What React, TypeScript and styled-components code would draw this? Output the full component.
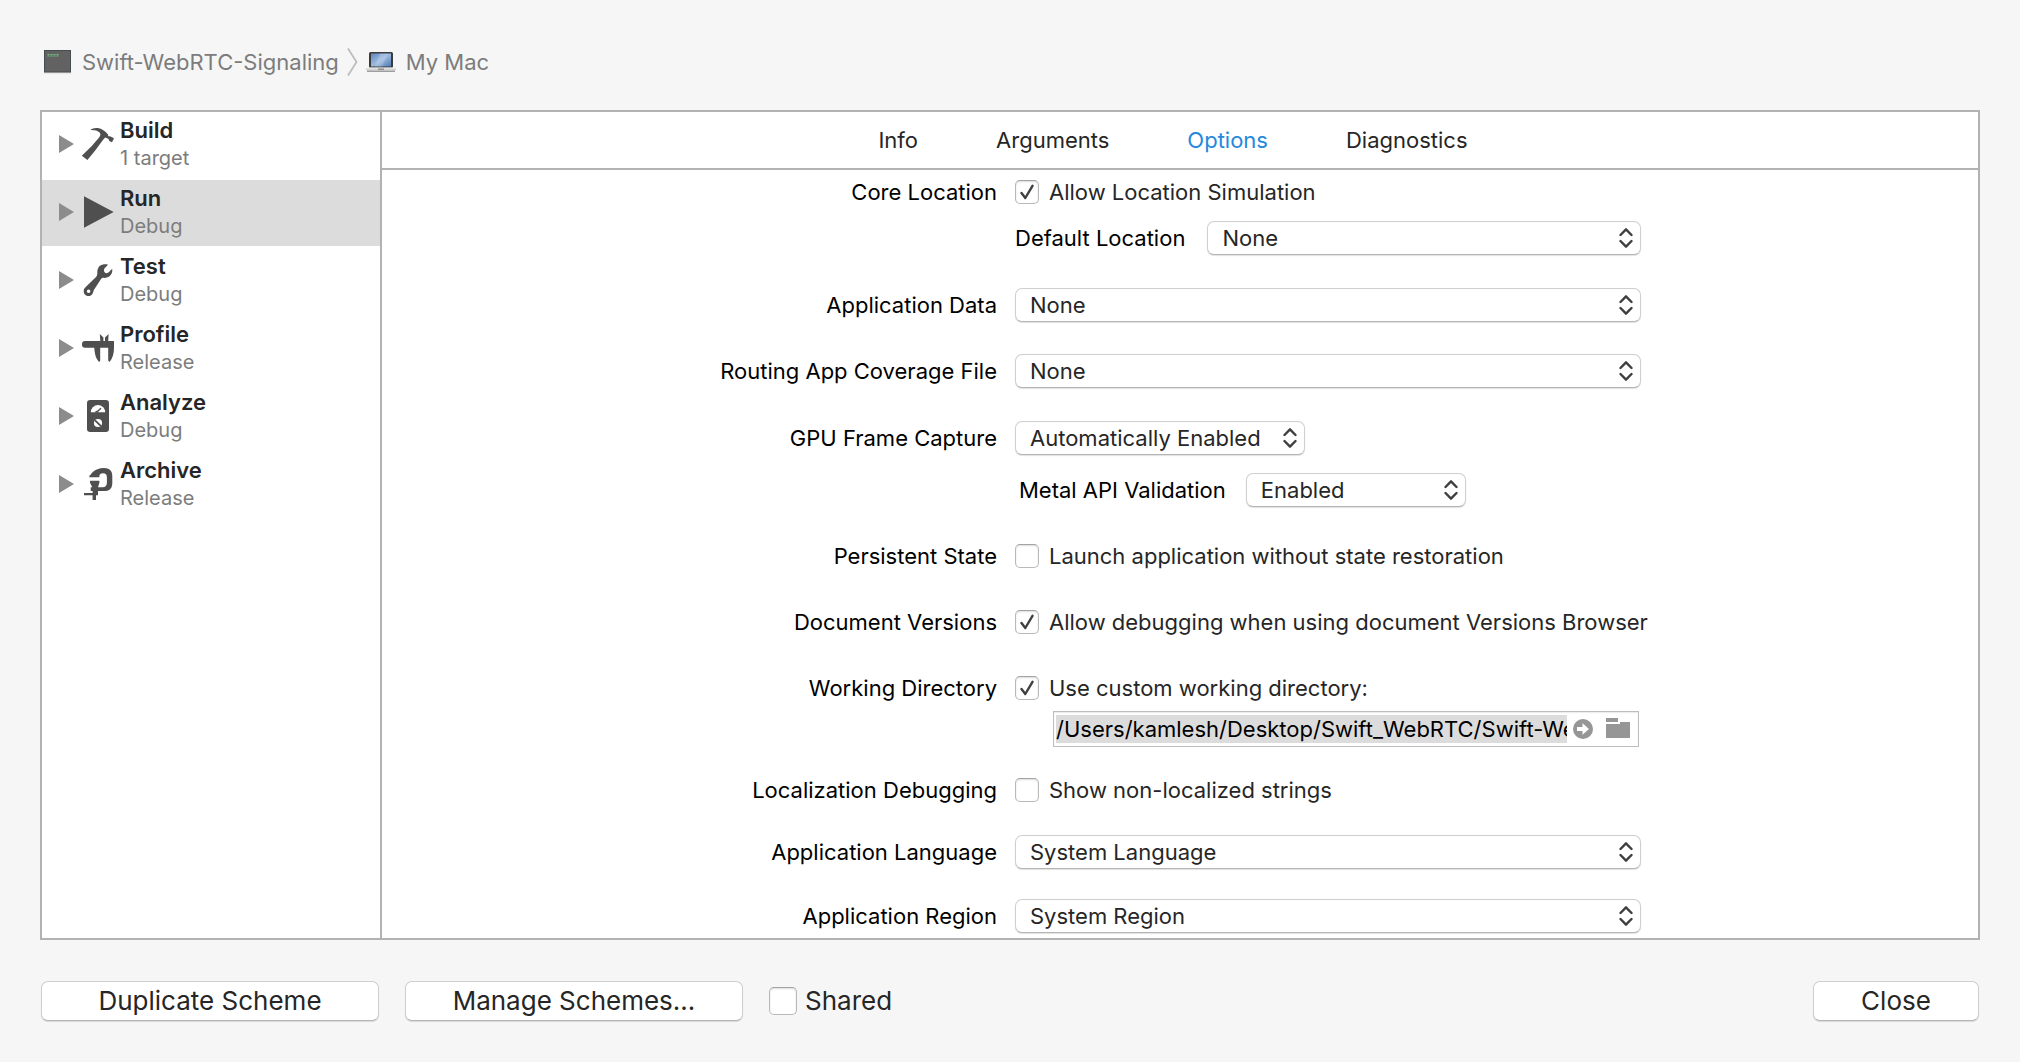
import React, { useState } from 'react';
import type { ReactNode } from 'react';
import styled, { createGlobalStyle, css } from 'styled-components';

const color = {
  window: '#f6f6f6',
  pane: '#ffffff',
  line: '#b2b2b2',
  selected: '#dcdcdc',
  text: '#262626',
  label: '#000000',
  muted: '#7c7c7c',
  glyph: '#4f4f4f',
  accent: '#2489dc',
};

const GlobalStyle = createGlobalStyle`
  *, *::before, *::after { box-sizing: border-box; }
  body { margin: 0; background: ${color.window}; }
  button, input, select { font: inherit; color: inherit; margin: 0; }
  button { border: 0; padding: 0; background: none; }
`;

const Window = styled.main`
  min-height: 100vh;
  padding: 44px 40px 40px;
  background: ${color.window};
  color: ${color.text};
  font-family: Inter, 'Liberation Sans', sans-serif;
  font-size: 22px;
  line-height: 28px;
`;

const Breadcrumb = styled.nav`
  display: flex;
  align-items: center;
  gap: 8px;
  height: 36px;
  margin-bottom: 30px;
  padding-left: 3px;
  color: ${color.muted};
`;

const Crumb = styled.button`
  display: flex;
  align-items: center;
  gap: 10px;
`;

const Panel = styled.section`
  display: grid;
  grid-template-columns: 338px minmax(0, 1fr);
  border: 2px solid ${color.line};
  background: ${color.pane};
`;

const ActionList = styled.ul`
  display: flex;
  flex-direction: column;
  gap: 2px;
  margin: 0;
  padding: 0;
  list-style: none;
`;

const ActionItem = styled.li<{ $selected: boolean }>`
  display: flex;
  align-items: center;
  gap: 8px;
  height: 66px;
  padding: 0 0 2px 17px;
  background: ${(p) => (p.$selected ? color.selected : 'transparent')};
`;

const Disclosure = styled.button`
  display: flex;
  width: 15px;
`;

const ActionButton = styled.button`
  display: flex;
  flex: 1;
  align-items: center;
  gap: 6px;
  text-align: left;
`;

const ActionText = styled.span`
  display: flex;
  flex-direction: column;
`;

const ActionName = styled.strong`
  font-weight: 600;
`;

const ActionDetail = styled.span`
  font-size: 20px;
  color: ${color.muted};
`;

const Content = styled.div`
  border-left: 2px solid ${color.line};
`;

const TabBar = styled.div`
  display: flex;
  justify-content: center;
  gap: 78px;
  height: 58px;
  padding-right: 14px;
  border-bottom: 2px solid ${color.line};
`;

const Tab = styled.button<{ $active: boolean }>`
  color: ${(p) => (p.$active ? color.accent : color.text)};
`;

const Form = styled.form`
  padding: 5px 0;
`;

const Row = styled.div<{ $space?: number }>`
  display: grid;
  grid-template-columns: minmax(0, 615fr) minmax(0, 626fr) minmax(0, 319fr);
  column-gap: 18px;
  margin-top: ${(p) => p.$space ?? 0}px;
`;

const rowLabel = css`
  line-height: 34px;
  color: ${color.label};
  white-space: nowrap;
`;

const RowLabel = styled.label`
  ${rowLabel}
  text-align: right;
`;

const RowTitle = styled.span`
  ${rowLabel}
  text-align: right;
`;

const Controls = styled.div<{ $gap?: number }>`
  display: flex;
  flex-direction: column;
  align-items: flex-start;
  gap: ${(p) => p.$gap ?? 0}px;
  min-width: 0;
`;

const SubRow = styled.div<{ $fill?: boolean; $gap: number }>`
  display: flex;
  gap: ${(p) => p.$gap}px;
  width: ${(p) => (p.$fill ? '100%' : 'auto')};
  padding-left: ${(p) => (p.$fill ? 0 : 4)}px;
`;

const SubLabel = styled.label`
  ${rowLabel}
`;

const raised = css`
  border: 1px solid #cfcfcf;
  border-bottom-color: #b4b4b4;
  border-radius: 7px;
  background: #ffffff;
  box-shadow: 0 1px 1px rgba(0, 0, 0, 0.12);
`;

const PopupFrame = styled.div<{ $width?: number }>`
  display: grid;
  align-items: center;
  ${(p) => (p.$width ? `width: ${p.$width}px;` : 'flex: 1;')}
`;

const PopupSelect = styled.select`
  ${raised}
  grid-area: 1 / 1;
  width: 100%;
  height: 34px;
  padding: 0 30px 0 14px;
  appearance: none;
`;

const PopupArrows = styled.svg`
  grid-area: 1 / 1;
  justify-self: end;
  margin-right: 8px;
  pointer-events: none;
`;

const CheckLabel = styled.label<{ $large?: boolean }>`
  display: flex;
  align-items: center;
  gap: ${(p) => (p.$large ? 8 : 10)}px;
  height: ${(p) => (p.$large ? 40 : 34)}px;
  white-space: nowrap;
`;

const CheckFrame = styled.span`
  display: grid;
  place-items: center;
`;

const CheckInput = styled.input<{ $size: number }>`
  grid-area: 1 / 1;
  width: ${(p) => p.$size}px;
  height: ${(p) => p.$size}px;
  border: 1px solid #b9b9b9;
  border-top-color: #a3a3a3;
  border-radius: 5px;
  background: #ffffff;
  box-shadow: inset 0 1px 2px rgba(0, 0, 0, 0.14);
  appearance: none;
`;

const CheckMark = styled.svg`
  grid-area: 1 / 1;
  pointer-events: none;
`;

const PathField = styled.div`
  display: flex;
  align-items: center;
  align-self: stretch;
  height: 36px;
  margin: 0 2px 0 38px;
  padding: 0 8px 0 2px;
  border: 1px solid #bdbdbd;
  box-shadow: inset 0 1px 1px rgba(0, 0, 0, 0.08);
`;

const PathInput = styled.input`
  flex: 1;
  min-width: 0;
  height: 28px;
  margin-right: 6px;
  padding: 0;
  border: 0;
  outline: 0;
  background: ${color.selected};
  color: ${color.label};
`;

const IconButton = styled.button`
  display: flex;

  & + & {
    margin-left: 13px;
  }
`;

const Footer = styled.footer`
  display: flex;
  align-items: center;
  gap: 26px;
  margin-top: 41px;
  padding: 0 1px;
  font-size: 26px;
`;

const PushButton = styled.button<{ $width: number }>`
  ${raised}
  width: ${(p) => p.$width}px;
  height: 40px;
`;

const FooterEnd = styled.div`
  margin-left: auto;
`;

const HammerIcon = () => (
  <svg width="32" height="32" viewBox="0 0 32 32" fill={color.glyph} overflow="visible">
    <path d="M9 1.2C12 .1 14.500-.2 16.800.2C19.500.7 21.800 2.200 23.400 3.800L25.900 6.200L26.300 8.200L28 8.300L32 10.200L30 14.200L27.300 13L26.300 10.800L23.200 9.400L21.300 11.600L13 22.700L5.400 32L-.2 27.700L9.800 18L17.300 9.200C18.600 7.400 18.800 6.200 17.600 4.600C15.800 2.500 12.500 1.800 9 1.900Z" />
  </svg>
);

const PlayIcon = () => (
  <svg width="32" height="32" viewBox="0 0 32 32" fill={color.glyph}>
    <path d="M2 .3L31.700 16L2 31.700Z" />
  </svg>
);

const WrenchIcon = () => (
  <svg width="32" height="32" viewBox="0 0 32 32" fill={color.glyph}>
    <path
      fillRule="evenodd"
      d="M25.700.4C25.800 1.200 25.200 1.800 24.400 2.500C22.800 3.900 21.800 5 22 6.800C22.200 8.300 23.300 9.300 24.800 9.200C26.500 9.100 27.500 7.500 28.600 6.300C29.200 5.600 29.700 5.200 30.300 5.300C30.600 8 29.600 11 27.200 12.600C25.300 13.900 23 14 20.800 13.800C19.900 13.900 19.200 14.700 18.400 15.900L11.700 26.200C11.300 28.900 9.800 32 6.700 32C3.800 32 1.700 29.900 1.700 27.200C1.700 25.500 2.400 24.300 3.700 23.100L13.800 13.200C15.200 11.600 15.200 10.600 15.300 8.900C15.200 6.300 15.800 3.800 17.600 2C19.700.2 23 0 25.700.4ZM6.600 25.500A1.800 1.800 0 1 0 6.600 29.100A1.800 1.800 0 1 0 6.600 25.500Z"
    />
  </svg>
);

const CaliperIcon = () => (
  <svg width="32" height="32" viewBox="0 0 32 32" fill={color.glyph}>
    <path d="M3 9H18.300L17.800 2L21.400 5.600V9H23V5.600L26.600 2L26.200 9H32V15.500C32 21.500 30.800 26 27.500 30L26.200 28.600V15.700H18.200V28.600L17.500 30C14 27.500 12.600 21.500 12.300 15.700H3A3 3 0 0 1 0 12.700V12A3 3 0 0 1 3 9Z" />
  </svg>
);

const MeterIcon = () => (
  <svg width="32" height="32" viewBox="0 0 32 32">
    <rect x="5" y="0" width="22" height="32" rx="3.200" fill={color.glyph} />
    <path d="M8.800 12.300A7.200 7.200 0 0 1 23.200 12.300Z" fill="#fff" />
    <path d="M14.500 12.300L19 8.300" stroke={color.glyph} strokeWidth="1.500" />
    <path d="M13 12.500A1.800 1.800 0 0 1 16.600 12.500Z" fill={color.glyph} />
    <circle cx="16" cy="23" r="4.100" fill="#fff" />
    <path d="M12.800 20.200L19 26.200" stroke={color.glyph} strokeWidth="1.800" />
  </svg>
);

const ClampIcon = () => (
  <svg width="32" height="32" viewBox="0 0 32 32" fill={color.glyph}>
    <path d="M9.500 5.200C13 1.600 17.500 0 22 0C27.500 0 30.300 2.800 30.300 8V15C30.300 20.500 27.500 23 22.500 23H16V25.200V27.300H14V32H10.600V27.300H2V25H10.600V23H8.700V19.200H10.300L8 14.800V12.800H17.400V14.800L16 19.200H20.500C23.700 19.200 24.900 17.600 24.900 14.500V9.200C24.900 6.500 23.600 5.300 21 5.300C19 5.300 18 6.100 17.400 7.600V9.200H7.400V7.600C8.500 7.300 9 6 9.500 5.200Z" />
  </svg>
);

const TerminalIcon = () => (
  <svg width="29" height="24" viewBox="0 0 29 24">
    <rect x="1" y="1.500" width="27" height="22" fill="#000" opacity=".12" />
    <rect x="1.500" y=".500" width="26" height="21.500" fill="#626262" stroke="#444d50" />
    <path d="M4.500 4.500H15.500M4.500 6H15.500" stroke="#72c083" strokeWidth="1" strokeDasharray="2 1" />
  </svg>
);

const LaptopIcon = () => (
  <svg width="30" height="22" viewBox="0 0 30 22">
    <defs>
      <linearGradient id="screen" x1="0" y1="0" x2="1" y2="1">
        <stop offset="0" stopColor="#5f87bd" />
        <stop offset=".5" stopColor="#9dbbe0" />
        <stop offset="1" stopColor="#4f78b2" />
      </linearGradient>
    </defs>
    <rect x="3" y="1" width="24" height="16" rx="1.500" fill="#3b3b3b" />
    <rect x="5" y="2.500" width="20" height="13" fill="url(#screen)" />
    <path d="M14 2.500L9 15.500H16L22 2.500Z" fill="#fff" opacity=".18" />
    <path d="M0 16.800H30V18.500L28.500 20.500H1.500L0 18.500Z" fill="#d2d2d2" />
    <path d="M0 17H30" stroke="#f4f4f4" />
    <path d="M1 20.300H29" stroke="#8b8b8b" />
    <rect x="12" y="17.500" width="6" height="1.500" fill="#8f8f8f" />
  </svg>
);

const CrumbSeparator = () => (
  <svg width="11" height="28" viewBox="0 0 11 28" fill="none" stroke="#bdbdbd" strokeWidth="1.800">
    <path d="M1 .5L9.500 14L1 27.500" />
  </svg>
);

const DisclosureIcon = () => (
  <svg width="15" height="18" viewBox="0 0 15 18" fill="#8c8c8c">
    <path d="M0 0L15 9L0 18Z" />
  </svg>
);

const RevealIcon = () => (
  <svg width="20" height="20" viewBox="0 0 20 20">
    <circle cx="10" cy="10" r="10" fill="#969696" />
    <path d="M4 8H9.500V4.200L16 10L9.500 15.800V12H4Z" fill="#fff" />
  </svg>
);

const FolderIcon = () => (
  <svg width="24" height="22" viewBox="0 0 24 22" fill="#969696">
    <path d="M0 0H12V4H0ZM0 6H14V4H24V20H0Z" />
  </svg>
);

type PopupProps = { id: string; value: string; width?: number };

const Popup = ({ id, value, width }: PopupProps) => (
  <PopupFrame $width={width}>
    <PopupSelect id={id} defaultValue={value}>
      <option>{value}</option>
    </PopupSelect>
    <PopupArrows
      width="14"
      height="20"
      viewBox="0 0 14 20"
      fill="none"
      stroke="#3f3f3f"
      strokeWidth="2.400"
      strokeLinecap="round"
      strokeLinejoin="round"
    >
      <path d="M1.500 7L7 1.300L12.500 7M1.500 13L7 18.700L12.500 13" />
    </PopupArrows>
  </PopupFrame>
);

type CheckProps = { children: ReactNode; initial?: boolean; large?: boolean };

const Check = ({ children, initial = false, large = false }: CheckProps) => {
  const [on, setOn] = useState(initial);
  return (
    <CheckLabel $large={large}>
      <CheckFrame>
        <CheckInput
          type="checkbox"
          $size={large ? 28 : 24}
          checked={on}
          onChange={(e) => setOn(e.target.checked)}
        />
        {on && (
          <CheckMark
            width="14"
            height="16"
            viewBox="0 0 14 16"
            fill="none"
            stroke="#404040"
            strokeWidth="2.400"
            strokeLinecap="round"
            strokeLinejoin="round"
          >
            <path d="M1.500 9L5.300 14L12.500 1.800" />
          </CheckMark>
        )}
      </CheckFrame>
      {children}
    </CheckLabel>
  );
};

const actions = [
  { name: 'Build', detail: '1 target', icon: <HammerIcon /> },
  { name: 'Run', detail: 'Debug', icon: <PlayIcon /> },
  { name: 'Test', detail: 'Debug', icon: <WrenchIcon /> },
  { name: 'Profile', detail: 'Release', icon: <CaliperIcon /> },
  { name: 'Analyze', detail: 'Debug', icon: <MeterIcon /> },
  { name: 'Archive', detail: 'Release', icon: <ClampIcon /> },
];

const tabs = ['Info', 'Arguments', 'Options', 'Diagnostics'];

export default function App() {
  const [action, setAction] = useState('Run');
  const [tab, setTab] = useState('Options');

  return (
    <Window>
      <GlobalStyle />
      <Breadcrumb>
        <Crumb type="button">
          <TerminalIcon />
          Swift-WebRTC-Signaling
        </Crumb>
        <CrumbSeparator />
        <Crumb type="button">
          <LaptopIcon />
          My Mac
        </Crumb>
      </Breadcrumb>

      <Panel>
        <ActionList>
          {actions.map(({ name, detail, icon }) => (
            <ActionItem key={name} $selected={name === action}>
              <Disclosure type="button">
                <DisclosureIcon />
              </Disclosure>
              <ActionButton type="button" onClick={() => setAction(name)}>
                {icon}
                <ActionText>
                  <ActionName>{name}</ActionName>
                  <ActionDetail>{detail}</ActionDetail>
                </ActionText>
              </ActionButton>
            </ActionItem>
          ))}
        </ActionList>

        <Content>
          <TabBar role="tablist">
            {tabs.map((name) => (
              <Tab
                key={name}
                type="button"
                role="tab"
                aria-selected={name === tab}
                $active={name === tab}
                onClick={() => setTab(name)}
              >
                {name}
              </Tab>
            ))}
          </TabBar>

          <Form>
            <Row>
              <RowTitle>Core Location</RowTitle>
              <Controls $gap={12}>
                <Check initial>Allow Location Simulation</Check>
                <SubRow $fill $gap={22}>
                  <SubLabel htmlFor="default-location">Default Location</SubLabel>
                  <Popup id="default-location" value="None" />
                </SubRow>
              </Controls>
            </Row>
            <Row $space={33}>
              <RowLabel htmlFor="app-data">Application Data</RowLabel>
              <Popup id="app-data" value="None" />
            </Row>
            <Row $space={32}>
              <RowLabel htmlFor="coverage">Routing App Coverage File</RowLabel>
              <Popup id="coverage" value="None" />
            </Row>
            <Row $space={33}>
              <RowLabel htmlFor="gpu-capture">GPU Frame Capture</RowLabel>
              <Controls $gap={18}>
                <Popup id="gpu-capture" value="Automatically Enabled" width={290} />
                <SubRow $gap={20}>
                  <SubLabel htmlFor="metal">Metal API Validation</SubLabel>
                  <Popup id="metal" value="Enabled" width={220} />
                </SubRow>
              </Controls>
            </Row>
            <Row $space={32}>
              <RowTitle>Persistent State</RowTitle>
              <Check>Launch application without state restoration</Check>
            </Row>
            <Row $space={32}>
              <RowTitle>Document Versions</RowTitle>
              <Check initial>Allow debugging when using document Versions Browser</Check>
            </Row>
            <Row $space={32}>
              <RowTitle>Working Directory</RowTitle>
              <Controls $gap={6}>
                <Check initial>Use custom working directory:</Check>
                <PathField>
                  <PathInput
                    aria-label="Working directory"
                    defaultValue="/Users/kamlesh/Desktop/Swift_WebRTC/Swift-We"
                  />
                  <IconButton type="button">
                    <RevealIcon />
                  </IconButton>
                  <IconButton type="button">
                    <FolderIcon />
                  </IconButton>
                </PathField>
              </Controls>
            </Row>
            <Row $space={26}>
              <RowTitle>Localization Debugging</RowTitle>
              <Check>Show non-localized strings</Check>
            </Row>
            <Row $space={28}>
              <RowLabel htmlFor="language">Application Language</RowLabel>
              <Popup id="language" value="System Language" />
            </Row>
            <Row $space={30}>
              <RowLabel htmlFor="region">Application Region</RowLabel>
              <Popup id="region" value="System Region" />
            </Row>
          </Form>
        </Content>
      </Panel>

      <Footer>
        <PushButton type="button" $width={338}>
          Duplicate Scheme
        </PushButton>
        <PushButton type="button" $width={338}>
          Manage Schemes...
        </PushButton>
        <Check large>Shared</Check>
        <FooterEnd>
          <PushButton type="button" $width={166}>
            Close
          </PushButton>
        </FooterEnd>
      </Footer>
    </Window>
  );
}
